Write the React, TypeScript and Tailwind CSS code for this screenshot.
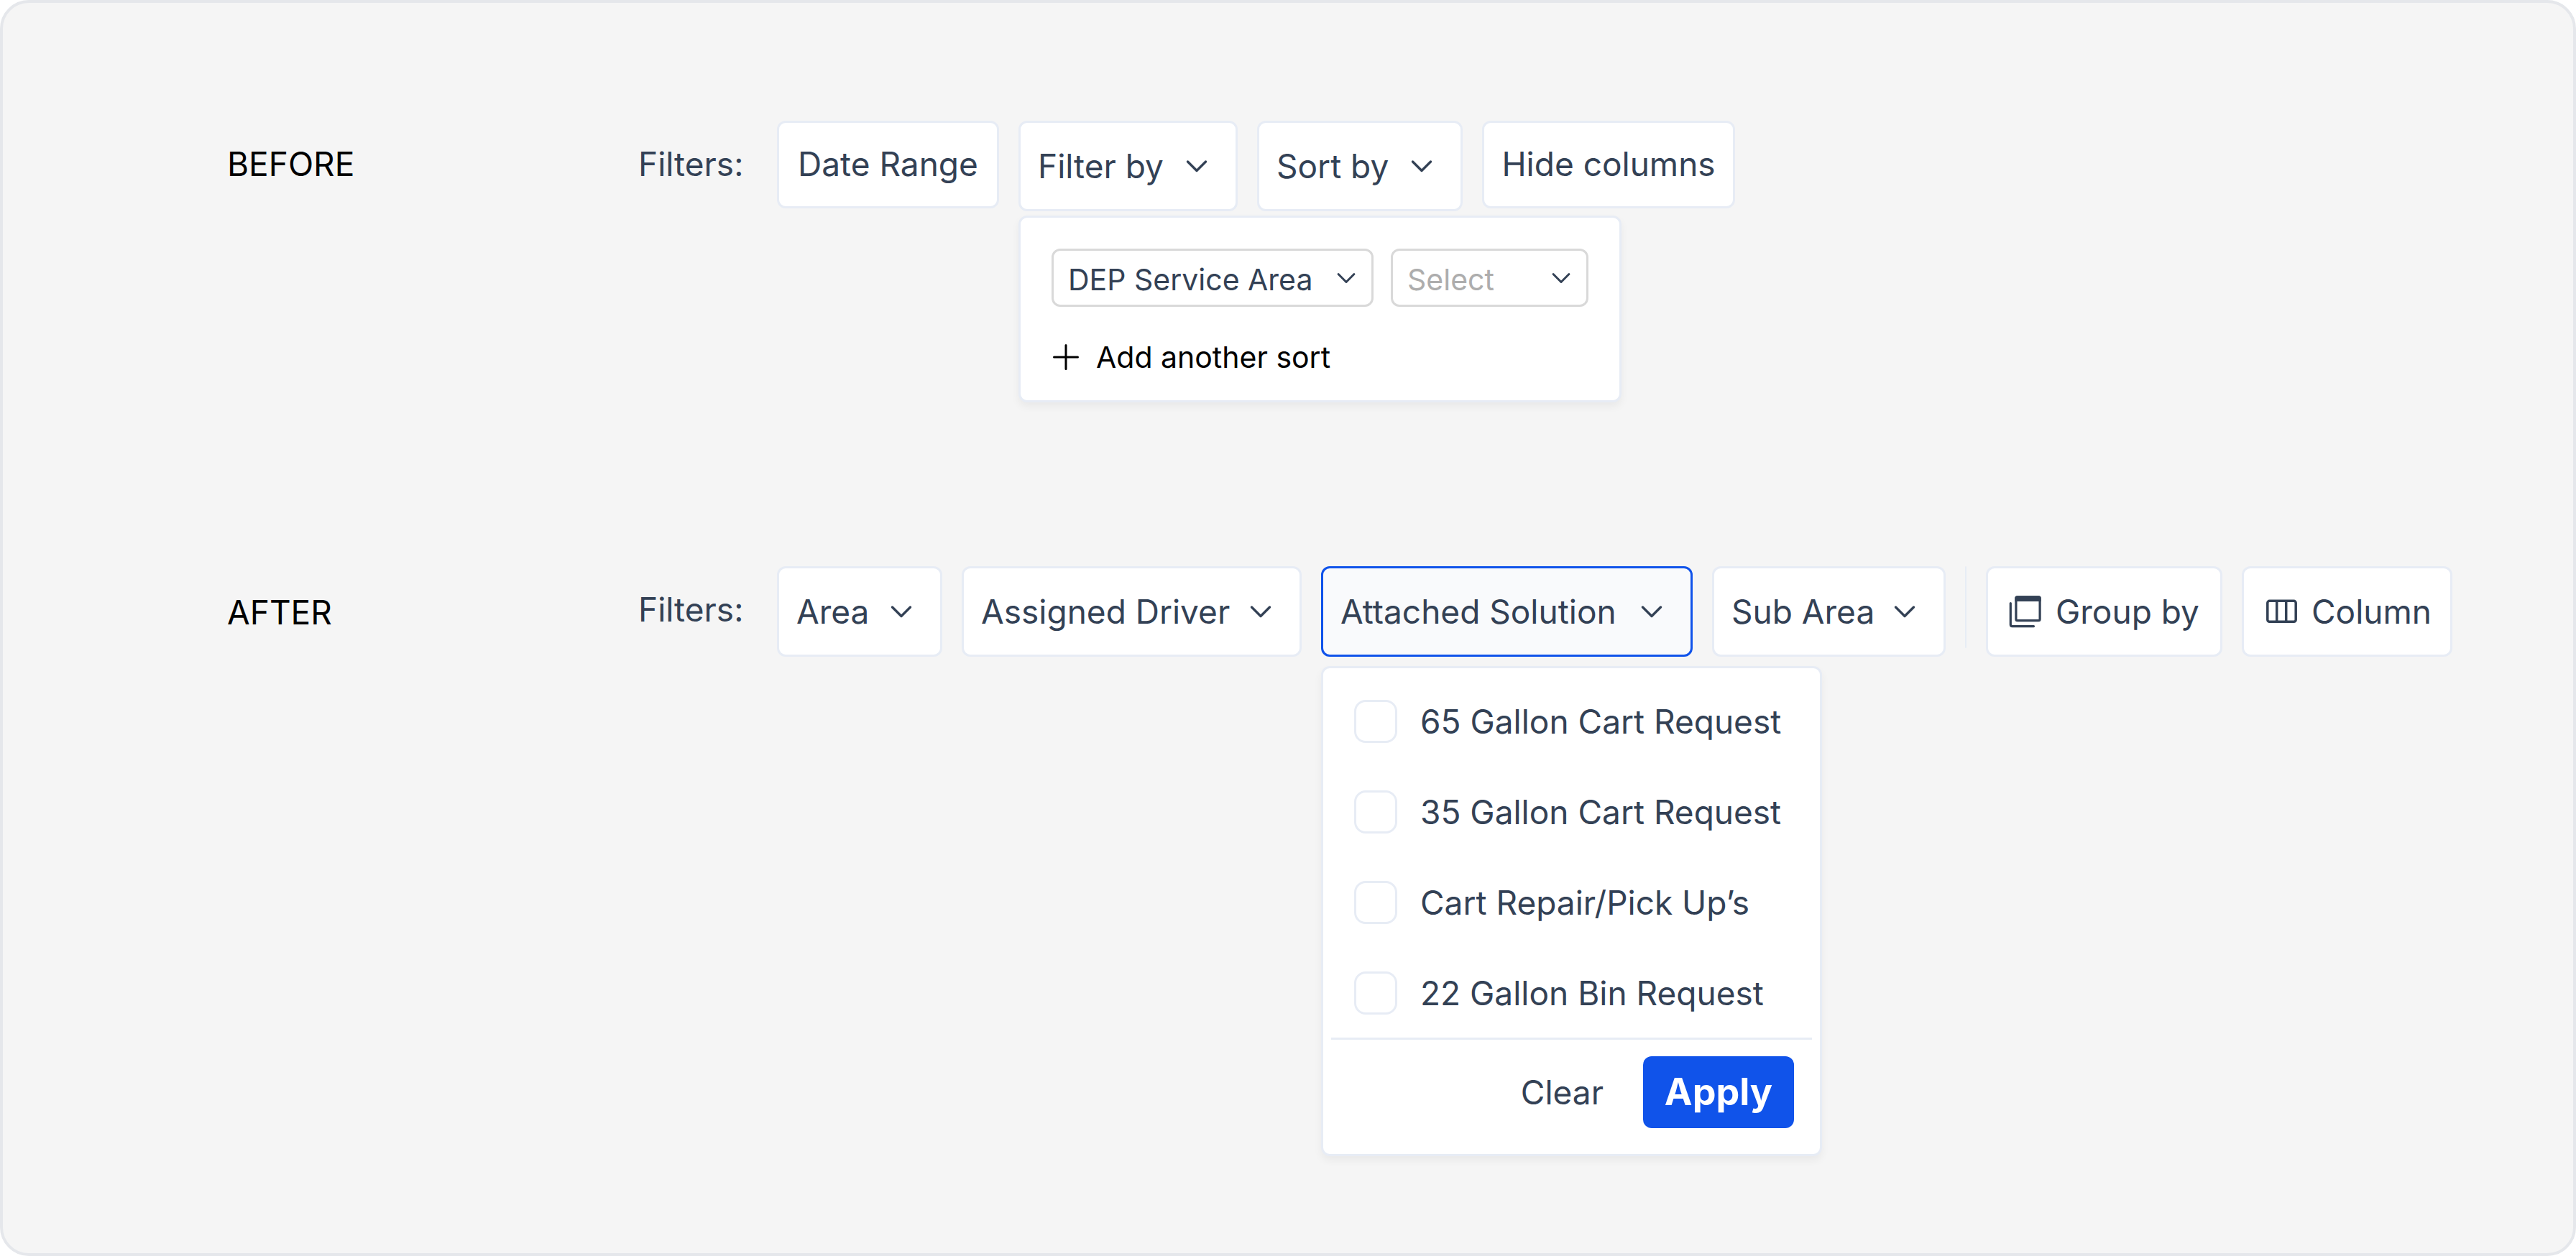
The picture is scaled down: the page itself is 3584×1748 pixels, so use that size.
import React from "react";

type ChevronProps = { className?: string };

function Chevron({ className = "" }: ChevronProps) {
  return (
    <svg viewBox="0 0 32 20" aria-hidden="true" className={`shrink-0 ${className}`} fill="none" stroke="currentColor" strokeWidth="3.4" strokeLinecap="round" strokeLinejoin="round">
      <path d="M3.5 4 16 16.5 28.5 4" />
    </svg>
  );
}

function PlusIcon() {
  return (
    <svg viewBox="0 0 40 40" aria-hidden="true" className="size-10 shrink-0" fill="none" stroke="currentColor" strokeWidth="3" strokeLinecap="round">
      <path d="M20 3.5V36.5M3.5 20H36.5" />
    </svg>
  );
}

function GroupIcon() {
  return (
    <svg viewBox="0 0 48 48" aria-hidden="true" className="size-12 shrink-0" fill="none" stroke="currentColor" strokeWidth="3.2" strokeLinecap="round">
      <rect x="10.9" y="3.9" width="33.2" height="32.8" rx="2" />
      <path d="M9.3 10V5.500a3.200 3.200 0 0 1 3.200-3.200h30a3.200 3.200 0 0 1 3.200 3.200V10z" fill="currentColor" stroke="none" />
      <path d="M3.3 12.600V42.200a2.400 2.400 0 0 0 2.400 2.400H35.500" />
    </svg>
  );
}

function ColumnsIcon() {
  return (
    <svg viewBox="0 0 48 48" aria-hidden="true" className="size-12 shrink-0" fill="none" stroke="currentColor" strokeWidth="3.5">
      <rect x="4.8" y="9.3" width="39.4" height="29" rx="2.8" />
      <path d="M17.7 9.3v29M30.700 9.3v29" />
    </svg>
  );
}

function TextButton({ label, className }: { label: string; className: string }) {
  return (
    <button type="button" className={`h-[122px] rounded-xl border-3 border-[#e7ecf5] bg-white pb-0.5 whitespace-nowrap ${className}`}>
      {label}
    </button>
  );
}

function MenuButton({ label, className, open = false }: { label: string; className: string; open?: boolean }) {
  return (
    <button
      type="button"
      aria-expanded={open}
      className={`flex h-[126px] items-center justify-between rounded-xl border-3 pr-[38px] pl-6 whitespace-nowrap ${
        open ? "border-[#1053ea] bg-[#f9fafc]" : "border-[#e7ecf5] bg-white"
      } ${className}`}
    >
      {label}
      <Chevron className="w-8" />
    </button>
  );
}

function IconButton({ label, icon, className }: { label: string; icon: React.ReactNode; className: string }) {
  return (
    <button type="button" className={`flex h-[126px] items-center gap-[18px] rounded-xl border-3 border-[#e7ecf5] bg-white pl-7 whitespace-nowrap ${className}`}>
      {icon}
      {label}
    </button>
  );
}

function SelectBox({ label, text, className, muted = false }: { label: string; text: string; className: string; muted?: boolean }) {
  return (
    <div className={`relative text-[#334155] ${className}`}>
      <select
        aria-label={label}
        className={`h-[81px] w-full appearance-none rounded-xl border-3 border-[#d9d9d9] bg-white pt-1 pl-5 text-[41px] ${
          muted ? "text-[#adadad]" : ""
        }`}
      >
        <option>{text}</option>
      </select>
      <Chevron className="pointer-events-none absolute top-8 right-6 w-7" />
    </div>
  );
}

const solutions = ["65 Gallon Cart Request", "35 Gallon Cart Request", "Cart Repair/Pick Up’s", "22 Gallon Bin Request"];

export default function App() {
  return (
    <main className="min-h-screen rounded-[40px] border-4 border-[#e5e7eb] bg-[#f5f5f5] pt-[164px] pl-[312px] font-['Inter',sans-serif] text-[46px] leading-[56px] text-[#334155]">
      <section className="flex h-[620px] items-start">
        <h2 className="w-[572px] shrink-0 pt-8 text-black">BEFORE</h2>
        <div className="flex items-start gap-[27px]">
          <span className="w-[166px] shrink-0 pt-8">Filters:</span>
          <TextButton label="Date Range" className="w-[309px]" />
          <div className="relative">
            <MenuButton label="Filter by" className="w-[305px]" />
            <div className="absolute top-full left-0 mt-1.5 flex w-[839px] flex-col rounded-xl border-3 border-[#e7ecf5] bg-white px-[43px] pt-[43px] pb-8 shadow-[0_6px_12px_rgba(0,0,0,0.05)]">
              <div className="flex gap-6">
                <SelectBox label="Field" text="DEP Service Area" className="grow" />
                <SelectBox label="Value" text="Select" className="w-[275px]" muted />
              </div>
              <button type="button" className="mt-[42px] flex items-center gap-[22px] self-start text-[41px] text-black">
                <PlusIcon />
                Add another sort
              </button>
            </div>
          </div>
          <MenuButton label="Sort by" className="w-[286px]" />
          <TextButton label="Hide columns" className="w-[352px]" />
        </div>
      </section>

      <section className="flex items-start">
        <h2 className="w-[572px] shrink-0 pt-9 text-black">AFTER</h2>
        <div className="flex items-start gap-[27px]">
          <span className="w-[166px] shrink-0 pt-8">Filters:</span>
          <MenuButton label="Area" className="w-[230px]" />
          <MenuButton label="Assigned Driver" className="w-[473px]" />
          <div className="relative">
            <MenuButton label="Attached Solution" className="w-[517px]" open />
            <form className="absolute top-full left-0 mt-[13px] w-[697px] rounded-xl border-3 border-[#e7ecf5] bg-white px-[11px] shadow-[0_6px_12px_rgba(0,0,0,0.05)]">
              <div className="flex flex-col gap-[66px] px-8 pt-[44px] pb-8">
                {solutions.map((name) => (
                  <label key={name} className="flex h-[60px] items-center gap-8 whitespace-nowrap">
                    <input type="checkbox" className="size-[60px] shrink-0 appearance-none rounded-2xl border-3 border-[#e7ecf5] bg-white checked:bg-[#1053ea]" />
                    {name}
                  </label>
                ))}
              </div>
              <div className="flex items-center justify-end gap-[55px] border-t-3 border-[#e7ecf5] pt-[23px] pr-[25px] pb-9">
                <button type="button">Clear</button>
                <button type="button" className="h-[100px] w-[210px] rounded-xl bg-[#1053ea] text-[52px] font-bold text-white">
                  Apply
                </button>
              </div>
            </form>
          </div>
          <MenuButton label="Sub Area" className="w-[325px]" />
          <div className="h-[114px] w-0.5 rounded-full bg-[#e7ecf5]" />
          <IconButton label="Group by" icon={<GroupIcon />} className="w-[329px]" />
          <IconButton label="Column" icon={<ColumnsIcon />} className="w-[293px]" />
        </div>
      </section>
    </main>
  );
}
